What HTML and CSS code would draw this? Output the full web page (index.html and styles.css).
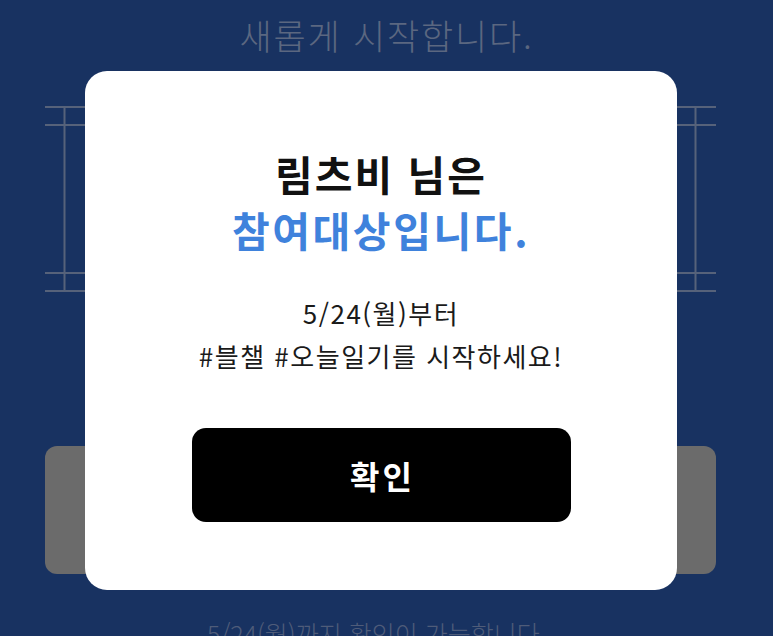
FILE: index.html
```html
<!DOCTYPE html>
<html lang="ko">
<head>
<meta charset="utf-8">
<title>참여대상</title>
<link rel="stylesheet" href="styles.css">
</head>
<body>
<div class="page">
  <h1 class="bg-title">새롭게 시작합니다.</h1>
  <div class="frame">
    <svg width="671" height="186" viewBox="0 0 671 186" aria-hidden="true">
      <g stroke="#56627a" stroke-width="2" fill="none">
        <line x1="0" y1="1" x2="671" y2="1"/>
        <line x1="0" y1="19" x2="671" y2="19"/>
        <line x1="0" y1="167" x2="671" y2="167"/>
        <line x1="0" y1="185" x2="671" y2="185"/>
        <line x1="19.5" y1="1" x2="19.5" y2="185"/>
        <line x1="650.5" y1="1" x2="650.5" y2="185"/>
      </g>
    </svg>
  </div>
  <div class="grey-box"></div>
  <p class="bg-note">5/24(월)까지 확인이 가능합니다.</p>

  <div class="modal">
    <div class="modal-title">
      <div class="line-dark">림츠비 님은</div>
      <div class="line-blue">참여대상입니다.</div>
    </div>
    <div class="modal-body">
      <div>5/24(월)부터</div>
      <div>#블챌 #오늘일기를 시작하세요!</div>
    </div>
    <button class="confirm" type="button">확인</button>
  </div>
</div>
</body>
</html>
```

FILE: styles.css
```css
* { box-sizing: border-box; }
html, body {
  margin: 0;
  padding: 0;
  height: 100%;
}
body {
  background: #183261;
  font-family: "Noto Sans CJK KR", "Noto Sans", sans-serif;
  overflow: hidden;
}
.page {
  position: relative;
  width: 773px;
  height: 636px;
  overflow: hidden;
  display: flex;
  flex-direction: column;
  align-items: center;
  padding-top: 12px;
}
.page > * { flex-shrink: 0; }
.bg-title {
  margin: 0;
  font-size: 35px;
  line-height: 46px;
  font-weight: 300;
  color: #5b6780;
  letter-spacing: 1.8px;
}
.frame {
  align-self: flex-start;
  margin-left: 45px;
  margin-top: 48px;
  width: 671px;
  height: 186px;
}
.frame svg { display: block; }
.grey-box {
  align-self: flex-start;
  margin-left: 45px;
  margin-top: 154px;
  width: 671px;
  height: 128px;
  background: #6b6b6b;
  border-radius: 12px;
}
.bg-note {
  margin: 44px 20px 0 0;
  font-size: 25px;
  line-height: 30px;
  font-weight: 300;
  color: #4f5c79;
  white-space: nowrap;
}
.modal {
  position: absolute;
  left: 85px;
  top: 71px;
  width: 592px;
  height: 519px;
  background: #fff;
  border-radius: 22px;
  display: flex;
  flex-direction: column;
  align-items: center;
  padding-top: 74px;
  text-align: center;
}
.modal-title {
  font-size: 41px;
  line-height: 56px;
  font-weight: 700;
}
.line-dark { color: #111; letter-spacing: 2px; }
.line-blue { color: #3f82dc; letter-spacing: 2.6px; }
.modal-body {
  margin-top: 34px;
  font-size: 26px;
  line-height: 43px;
  color: #1a1a1a;
  font-weight: 400;
  letter-spacing: 1.5px;
}
.confirm {
  margin-top: 51px;
  width: 379px;
  height: 94px;
  background: #000;
  color: #fff;
  border: none;
  border-radius: 14px;
  font-family: inherit;
  font-size: 32px;
  font-weight: 700;
  letter-spacing: 3px;
  padding: 0 0 0 3px;
}
```
